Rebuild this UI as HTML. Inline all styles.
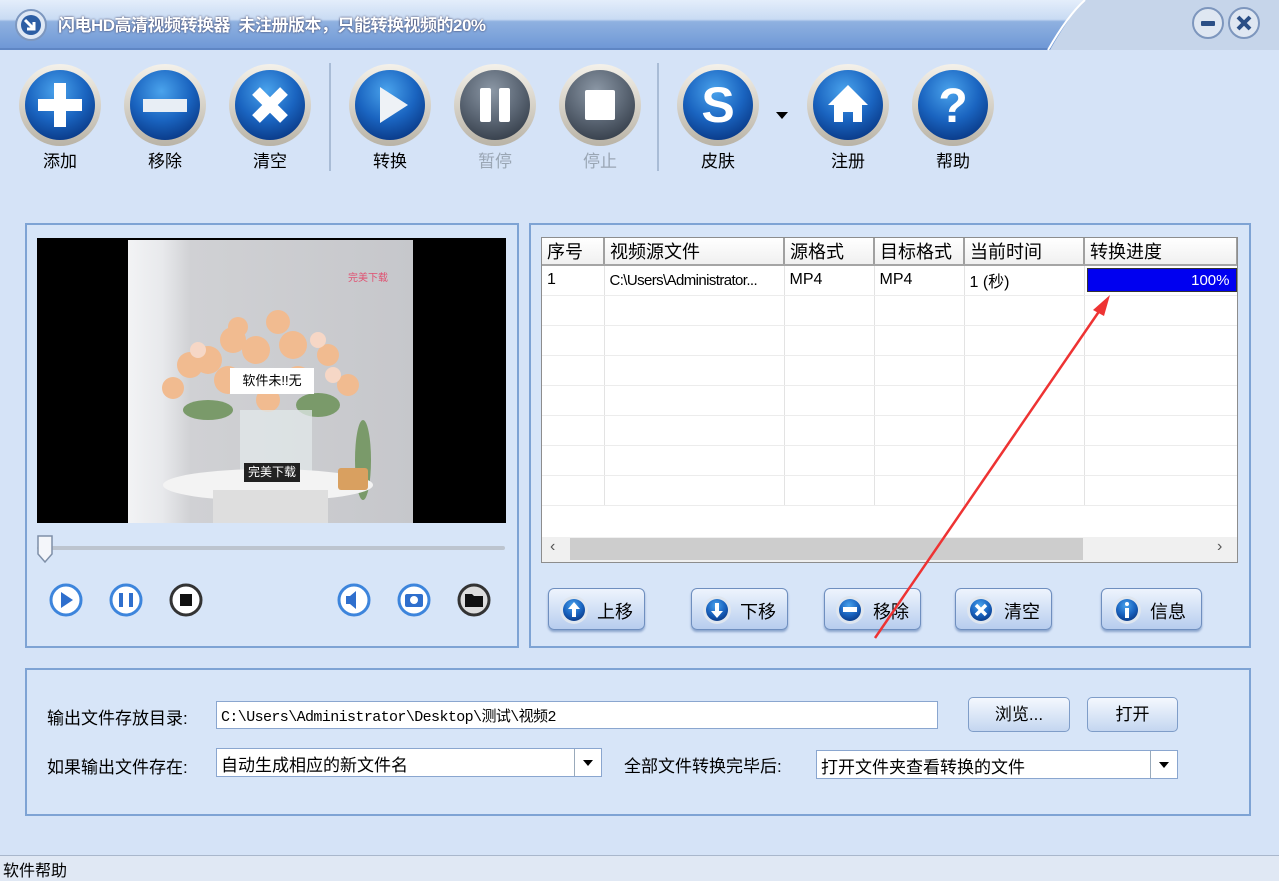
<!DOCTYPE html>
<html><head><meta charset="utf-8">
<style>
*{margin:0;padding:0;box-sizing:border-box}
body{width:1279px;height:881px;overflow:hidden;background:#d5e3f7;font-family:"Liberation Sans","Noto Sans CJK SC",sans-serif;font-size:16px;color:#000;position:relative}
.a{position:absolute}
.title{left:0;top:0;width:1279px;height:50px;background:linear-gradient(#e4eefb 0%,#c9dbf3 40%,#8fb1e0 45%,#6f98d6 100%);border-bottom:2px solid #5f86c4}
.tt{left:58px;top:11px;color:#fff;font-weight:bold;font-size:17px;letter-spacing:-0.5px;text-shadow:0 0 2px #335}
.lbl{font-size:17px;width:80px;text-align:center;top:147px}
.panel{border:2px solid #7ea3d4;background:#d7e5f8}
.sep{width:2px;background:#a9bcd6;top:63px;height:108px}
td,th{border-right:1px solid #e3e3e3;border-bottom:1px solid #ececec;height:30px;font-weight:normal;font-size:16px;text-align:left;padding-left:5px;white-space:nowrap;overflow:hidden}
th{height:27px;background:linear-gradient(#fff,#f0f0f0);border-right:2px solid #a0a0a0;border-bottom:2px solid #a5a5a5;font-size:18px}
table{border-collapse:collapse;table-layout:fixed}
.btn{height:42px;border:1px solid #6f8fbf;border-radius:6px;background:linear-gradient(#eef4fd,#b7cdee);font-size:18px;box-shadow:0 2px 2px #8aa4cc}
.btn span{position:absolute;left:48px;top:9px}
.inp{background:#fff;border:1px solid #8aa6cf;font-size:17px;padding:2px 4px}
.b2{height:35px;border:1px solid #7f9dc8;border-radius:5px;background:linear-gradient(#f4f8fe,#c4d6f0);font-size:17px;text-align:center;line-height:33px}
</style></head><body>
<svg width="0" height="0" style="position:absolute">
<defs>
<radialGradient id="bl" cx="45%" cy="30%" r="70%"><stop offset="0" stop-color="#4aa3ec"/><stop offset="0.6" stop-color="#1a64c0"/><stop offset="1" stop-color="#0b3d8c"/></radialGradient>
<radialGradient id="gr" cx="45%" cy="30%" r="70%"><stop offset="0" stop-color="#8c98a6"/><stop offset="0.6" stop-color="#5b6674"/><stop offset="1" stop-color="#3a434f"/></radialGradient>
<linearGradient id="rim" x1="0" y1="0" x2="0" y2="1"><stop offset="0" stop-color="#f4f1ea"/><stop offset="1" stop-color="#b9b3a6"/></linearGradient>
</defs></svg>

<div class="a title"></div>
<svg class="a" style="left:14px;top:8px" width="34" height="34"><circle cx="17" cy="17" r="15" fill="#dfe8f5" stroke="#7d97bf" stroke-width="2"/><circle cx="17" cy="17" r="10" fill="#2d5ea4"/><path d="M11 12 L20 21 M20 14 V21 H13" stroke="#fff" stroke-width="3" fill="none"/></svg>
<div class="a tt">闪电HD高清视频转换器&nbsp;&nbsp;未注册版本，只能转换视频的20%</div>
<svg class="a" style="left:1040px;top:0" width="239" height="52"><path d="M0 50 L10 50 Q30 15 45 0 H239 V50 Z" fill="#c6d5ea"/><path d="M8 50 Q28 15 45 0" stroke="#fff" stroke-width="2" fill="none"/>
<circle cx="168" cy="23" r="15" fill="#dfe7f2" stroke="#7d96bd" stroke-width="2"/><rect x="161" y="21" width="14" height="5" rx="1" fill="#2b4f86"/>
<circle cx="204" cy="23" r="15" fill="#dfe7f2" stroke="#7d96bd" stroke-width="2"/><path d="M198 17 L210 29 M210 17 L198 29" stroke="#2b4f86" stroke-width="4"/></svg>

<!-- toolbar -->
<svg class="a" style="left:0;top:60px" width="1010" height="92">
<g transform="translate(60,45)"><circle r="41" fill="url(#rim)"/><circle r="35" fill="url(#bl)"/><path d="M-6 -22 H6 V-6 H22 V6 H6 V22 H-6 V6 H-22 V-6 H-6Z" fill="#fff"/></g>
<g transform="translate(165,45)"><circle r="41" fill="url(#rim)"/><circle r="35" fill="url(#bl)"/><rect x="-22" y="-6" width="44" height="13" fill="#e8eef5"/></g>
<g transform="translate(270,45)"><circle r="41" fill="url(#rim)"/><circle r="35" fill="url(#bl)"/><path d="M-14 -14 L14 14 M14 -14 L-14 14" stroke="#fff" stroke-width="11"/></g>
<g transform="translate(390,45)"><circle r="41" fill="url(#rim)"/><circle r="35" fill="url(#bl)"/><path d="M-10 -18 L18 0 L-10 18Z" fill="#eef2f6"/></g>
<g transform="translate(495,45)"><circle r="41" fill="url(#rim)"/><circle r="35" fill="url(#gr)"/><rect x="-15" y="-17" width="11" height="34" rx="2" fill="#fff"/><rect x="4" y="-17" width="11" height="34" rx="2" fill="#fff"/></g>
<g transform="translate(600,45)"><circle r="41" fill="url(#rim)"/><circle r="35" fill="url(#gr)"/><rect x="-15" y="-15" width="30" height="30" rx="2" fill="#fff"/></g>
<g transform="translate(718,45)"><circle r="41" fill="url(#rim)"/><circle r="35" fill="url(#bl)"/><text x="0" y="17" text-anchor="middle" font-family="Liberation Sans" font-weight="bold" font-size="50" fill="#fff">S</text></g>
<path d="M776 52 L788 52 L782 59Z" fill="#000"/>
<g transform="translate(848,45)"><circle r="41" fill="url(#rim)"/><circle r="35" fill="url(#bl)"/><path d="M0 -20 L20 0 H14 V17 H5 V7 H-5 V17 H-14 V0 H-20Z" fill="#fff"/></g>
<g transform="translate(953,45)"><circle r="41" fill="url(#rim)"/><circle r="35" fill="url(#bl)"/><text x="0" y="17" text-anchor="middle" font-family="Liberation Sans" font-weight="bold" font-size="48" fill="#fff">?</text></g>
</svg>
<div class="a lbl" style="left:20px">添加</div>
<div class="a lbl" style="left:125px">移除</div>
<div class="a lbl" style="left:230px">清空</div>
<div class="a lbl" style="left:350px">转换</div>
<div class="a lbl" style="left:455px;color:#9aa6b4">暂停</div>
<div class="a lbl" style="left:560px;color:#9aa6b4">停止</div>
<div class="a lbl" style="left:678px">皮肤</div>
<div class="a lbl" style="left:808px">注册</div>
<div class="a lbl" style="left:913px">帮助</div>
<div class="a sep" style="left:329px"></div>
<div class="a sep" style="left:657px"></div>

<!-- left panel -->
<div class="a panel" style="left:25px;top:223px;width:494px;height:425px"></div>
<div class="a" style="left:37px;top:238px;width:469px;height:285px;background:#000"></div>
<div class="a" style="left:128px;top:240px;width:285px;height:283px;background:linear-gradient(90deg,#f2f3f5 0%,#e8e9ec 12%,#d0d1d4 22%,#c6c7cb 100%)"></div>
<svg class="a" style="left:128px;top:240px" width="285" height="283">
<g fill="#7a9a6a"><ellipse cx="80" cy="170" rx="25" ry="10"/><ellipse cx="190" cy="165" rx="22" ry="12"/><ellipse cx="235" cy="220" rx="8" ry="40"/></g>
<g fill="#f1bb90"><circle cx="80" cy="120" r="14"/><circle cx="105" cy="100" r="13"/><circle cx="128" cy="110" r="14"/><circle cx="165" cy="105" r="14"/><circle cx="200" cy="115" r="11"/><circle cx="45" cy="148" r="11"/><circle cx="62" cy="125" r="13"/><circle cx="100" cy="140" r="14"/><circle cx="170" cy="140" r="14"/><circle cx="150" cy="82" r="12"/><circle cx="110" cy="87" r="10"/><circle cx="220" cy="145" r="11"/><circle cx="140" cy="160" r="12"/></g>
<g fill="#f6d7c6"><circle cx="70" cy="110" r="8"/><circle cx="190" cy="100" r="8"/><circle cx="205" cy="135" r="8"/></g>
<rect x="112" y="170" width="72" height="70" fill="rgba(225,232,234,0.75)"/>
<ellipse cx="140" cy="245" rx="105" ry="16" fill="#f3f3f3"/>
<rect x="85" y="250" width="115" height="33" fill="#dedede"/>
<rect x="210" y="228" width="30" height="22" rx="3" fill="#d9a060"/>
</svg>
<div class="a" style="left:230px;top:368px;width:84px;height:26px;background:#fff;font-size:13px;text-align:center;line-height:26px">软件未!!无</div>
<div class="a" style="left:244px;top:463px;width:56px;height:19px;background:#222;color:#fff;font-size:12px;text-align:center;line-height:19px">完美下载</div>
<div class="a" style="left:348px;top:269px;color:#e05070;font-size:10px">完美下载</div>
<div class="a" style="left:37px;top:546px;width:468px;height:4px;background:#bcc4cf;border-radius:2px"></div>
<svg class="a" style="left:36px;top:534px" width="18" height="30"><path d="M2 2 H16 V20 L9 28 L2 20Z" fill="#f4f6fa" stroke="#7e8fa8" stroke-width="1.5"/></svg>
<svg class="a" style="left:45px;top:580px" width="450" height="40">
<g stroke-width="3" fill="#fff">
<circle cx="21" cy="20" r="15" stroke="#3d85dc"/><path d="M16 12 L28 20 L16 28Z" fill="#2f6fcd"/>
<circle cx="81" cy="20" r="15" stroke="#3d85dc"/><rect x="74" y="13" width="4" height="14" fill="#2f6fcd" stroke="none"/><rect x="84" y="13" width="4" height="14" fill="#2f6fcd" stroke="none"/>
<circle cx="141" cy="20" r="15" stroke="#333"/><rect x="135" y="14" width="12" height="12" fill="#111" stroke="none"/>
<circle cx="309" cy="20" r="15" stroke="#3d85dc"/><path d="M301 16 H305 L311 11 V29 L305 24 H301Z" fill="#2f6fcd" stroke="none"/>
<circle cx="369" cy="20" r="15" stroke="#3d85dc"/><rect x="360" y="14" width="18" height="13" rx="2" fill="#2f6fcd" stroke="none"/><circle cx="369" cy="20" r="4" fill="#fff" stroke="none"/>
<circle cx="429" cy="20" r="15" stroke="#333" fill="#ddd"/><path d="M420 14 H427 L429 16 H438 V27 H420Z" fill="#111" stroke="none"/>
</g></svg>

<!-- right panel -->
<div class="a panel" style="left:529px;top:223px;width:722px;height:425px"></div>
<div class="a" style="left:541px;top:237px;width:697px;height:326px;background:#fff;border:1px solid #8d8d8d;overflow:hidden">
<table style="width:695px">
<colgroup><col style="width:62px"><col style="width:180px"><col style="width:90px"><col style="width:90px"><col style="width:120px"><col style="width:153px"></colgroup>
<tr><th>序号</th><th>视频源文件</th><th>源格式</th><th>目标格式</th><th>当前时间</th><th>转换进度</th></tr>
<tr><td>1</td><td style="font-size:15px;letter-spacing:-0.6px">C:\Users\Administrator...</td><td>MP4</td><td>MP4</td><td>1 (秒)</td><td style="padding:2px 0 2px 2px"><div style="background:#0000f0;color:#fff;text-align:right;padding-right:6px;height:24px;line-height:24px;font-size:15px;border:1px solid #333">100%</div></td></tr>
<tr><td></td><td></td><td></td><td></td><td></td><td></td></tr>
<tr><td></td><td></td><td></td><td></td><td></td><td></td></tr>
<tr><td></td><td></td><td></td><td></td><td></td><td></td></tr>
<tr><td></td><td></td><td></td><td></td><td></td><td></td></tr>
<tr><td></td><td></td><td></td><td></td><td></td><td></td></tr>
<tr><td></td><td></td><td></td><td></td><td></td><td></td></tr>
<tr><td></td><td></td><td></td><td></td><td></td><td></td></tr>
</table>
<div class="a" style="left:0;top:299px;width:695px;height:25px;background:#f0f0f0"></div>
<div class="a" style="left:28px;top:300px;width:513px;height:22px;background:#cdcdcd"></div>
<div class="a" style="left:8px;top:300px;font-size:16px;color:#555">&lsaquo;</div>
<div class="a" style="left:675px;top:300px;font-size:16px;color:#555">&rsaquo;</div>
</div>
<div class="a btn" style="left:548px;top:588px;width:97px"><svg class="a" style="left:10px;top:6px" width="30" height="30"><circle cx="15" cy="15" r="14" fill="#dfe6ef"/><circle cx="15" cy="15" r="11" fill="url(#bl)"/><path d="M15 7 L21 14 H17 V22 H13 V14 H9Z" fill="#fff"/></svg><span>上移</span></div>
<div class="a btn" style="left:691px;top:588px;width:97px"><svg class="a" style="left:10px;top:6px" width="30" height="30"><circle cx="15" cy="15" r="14" fill="#dfe6ef"/><circle cx="15" cy="15" r="11" fill="url(#bl)"/><path d="M15 23 L21 16 H17 V8 H13 V16 H9Z" fill="#fff"/></svg><span>下移</span></div>
<div class="a btn" style="left:824px;top:588px;width:97px"><svg class="a" style="left:10px;top:6px" width="30" height="30"><circle cx="15" cy="15" r="14" fill="#dfe6ef"/><circle cx="15" cy="15" r="11" fill="url(#bl)"/><rect x="8" y="12" width="14" height="5" fill="#fff"/></svg><span>移除</span></div>
<div class="a btn" style="left:955px;top:588px;width:97px"><svg class="a" style="left:10px;top:6px" width="30" height="30"><circle cx="15" cy="15" r="14" fill="#dfe6ef"/><circle cx="15" cy="15" r="11" fill="url(#bl)"/><path d="M10 10 L20 20 M20 10 L10 20" stroke="#fff" stroke-width="3.5"/></svg><span>清空</span></div>
<div class="a btn" style="left:1101px;top:588px;width:101px"><svg class="a" style="left:10px;top:6px" width="30" height="30"><circle cx="15" cy="15" r="14" fill="#dfe6ef"/><circle cx="15" cy="15" r="11" fill="url(#bl)"/><circle cx="15" cy="9" r="2" fill="#fff"/><rect x="13" y="13" width="4" height="10" fill="#fff"/></svg><span>信息</span></div>

<!-- bottom panel -->
<div class="a panel" style="left:25px;top:668px;width:1226px;height:148px"></div>
<div class="a" style="left:47px;top:704px;font-size:17px">输出文件存放目录:</div>
<div class="a inp" style="left:216px;top:701px;width:722px;height:28px;font-family:'Liberation Mono','Noto Sans CJK SC',monospace;font-size:15px;letter-spacing:-0.6px;padding-top:3px">C:\Users\Administrator\Desktop\测试\视频2</div>
<div class="a b2" style="left:968px;top:697px;width:102px">浏览...</div>
<div class="a b2" style="left:1087px;top:697px;width:91px">打开</div>
<div class="a" style="left:47px;top:753px;font-size:17px">如果输出文件存在:</div>
<div class="a inp" style="left:216px;top:748px;width:386px;height:29px;font-size:17px">自动生成相应的新文件名</div>
<div class="a" style="left:574px;top:749px;width:27px;height:27px;border-left:1px solid #9ab;background:#fff"><div style="margin:11px auto 0;width:0;height:0;border-left:5px solid transparent;border-right:5px solid transparent;border-top:6px solid #000"></div></div>
<div class="a" style="left:624px;top:752px;font-size:17px">全部文件转换完毕后:</div>
<div class="a inp" style="left:816px;top:750px;width:362px;height:29px;font-size:17px">打开文件夹查看转换的文件</div>
<div class="a" style="left:1150px;top:751px;width:27px;height:27px;border-left:1px solid #9ab;background:#fff"><div style="margin:11px auto 0;width:0;height:0;border-left:5px solid transparent;border-right:5px solid transparent;border-top:6px solid #000"></div></div>

<!-- status -->
<div class="a" style="left:0;top:855px;width:1279px;height:26px;background:#e0e8f4;border-top:1px solid #a9b7cc;font-size:16px;padding:1px 3px">软件帮助</div>

<!-- arrow -->
<svg class="a" style="left:0;top:0" width="1279" height="881"><line x1="875" y1="638" x2="1100" y2="310" stroke="#ee3333" stroke-width="2.5"/><path d="M1110 295 L1093 310 L1104 316Z" fill="#ee3333"/></svg>
</body></html>
